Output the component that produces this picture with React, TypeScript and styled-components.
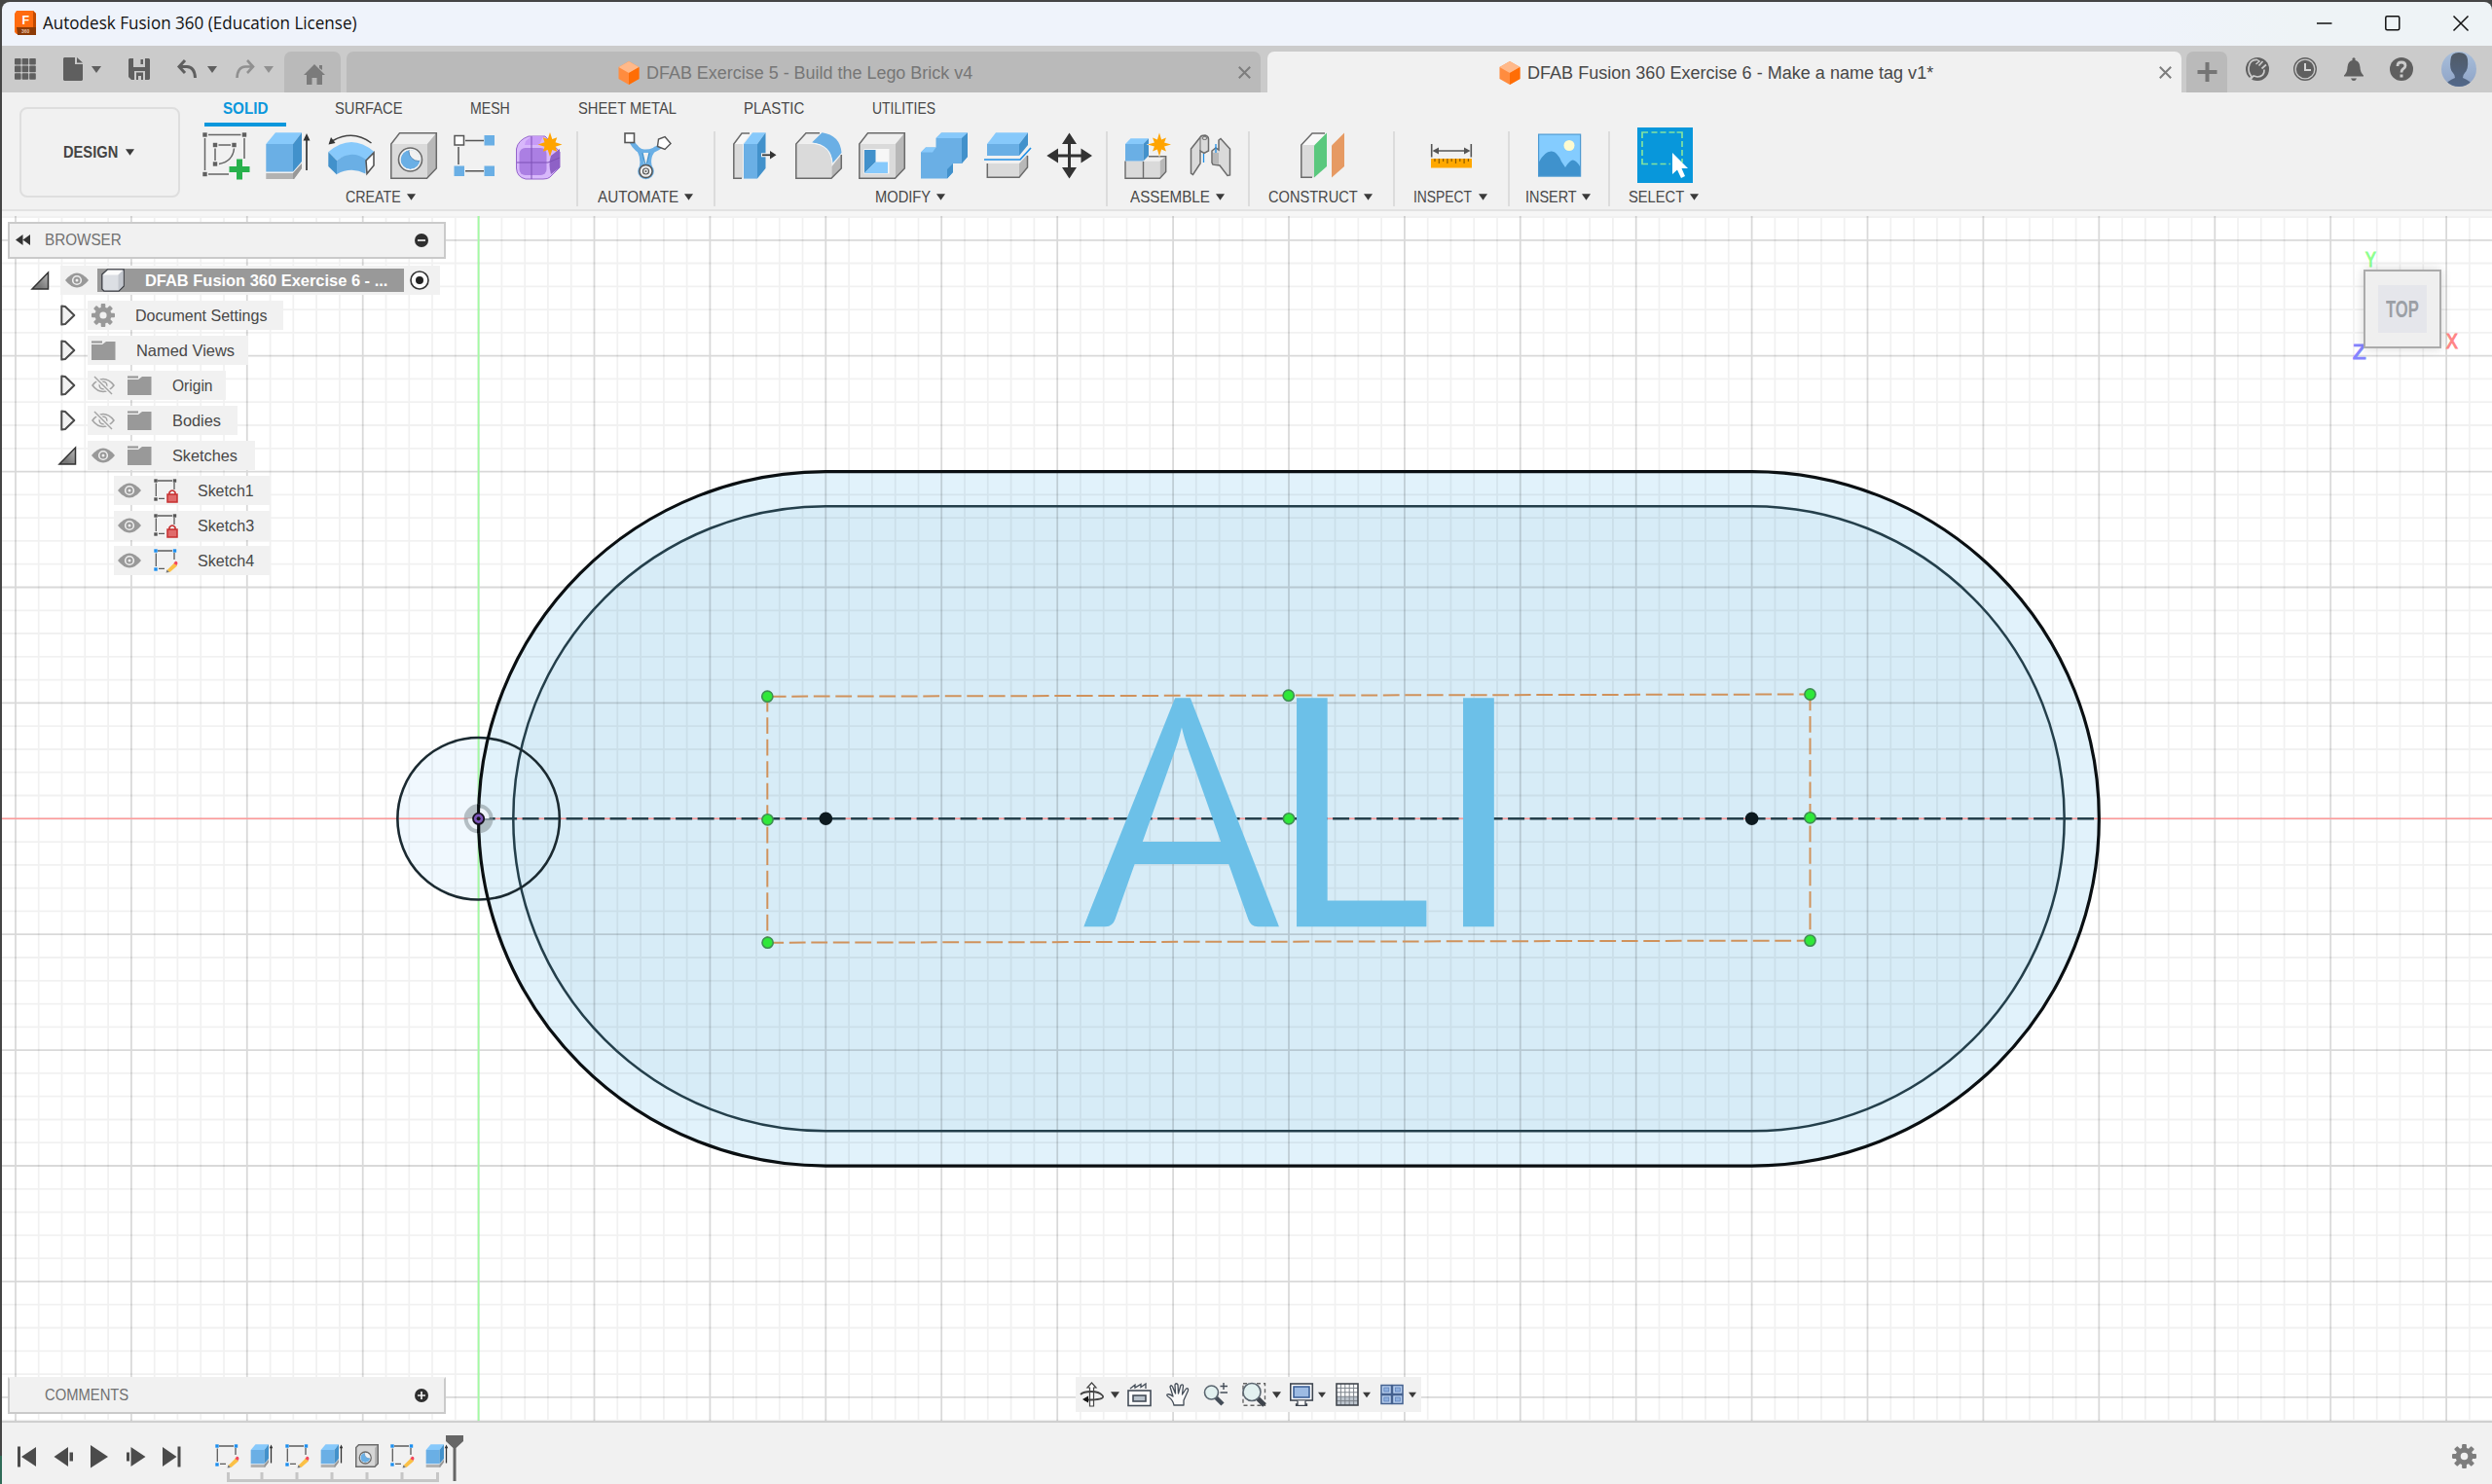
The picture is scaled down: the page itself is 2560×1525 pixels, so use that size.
import React, { useLayoutEffect, useRef, useState } from "react";
import styled, { createGlobalStyle, css } from "styled-components";

const Global = createGlobalStyle`
  html, body { margin: 0; padding: 0; background: #454545; }
  body { font-family: "Liberation Sans", Arial, sans-serif; overflow: hidden; }
  svg { display: block; flex: none; }
  * { box-sizing: border-box; }
`;

/* ---------- text squeezed to a set width ---------- */

const FitBox = styled.span<{ $w: number }>`
  display: inline-block;
  width: ${(p) => p.$w}px;
  flex: none;
  white-space: nowrap;
`;
const FitInner = styled.span`
  display: inline-block;
  transform-origin: 0 50%;
`;
function Fit({ w, children }: { w: number; children: string }) {
  const ref = useRef<HTMLSpanElement>(null);
  const [k, setK] = useState(1);
  useLayoutEffect(() => {
    if (ref.current) setK(w / ref.current.offsetWidth);
  }, [w, children]);
  return (
    <FitBox $w={w}>
      <FitInner ref={ref} style={{ transform: `scaleX(${k})` }}>{children}</FitInner>
    </FitBox>
  );
}

/* ---------- window ---------- */

const Window = styled.div`
  width: 2560px;
  height: 1525px;
  padding: 2px 0 0 2px;
  background: linear-gradient(#454545 0 1496px, #2f6b57 1496px);
  display: flex;
  flex-direction: column;
  overflow: hidden;
`;
const TitleBar = styled.header`
  height: 45px;
  flex: none;
  background: linear-gradient(90deg, #eff3fb 0 86%, #eef3f6 92%);
  border-radius: 8px 8px 0 0;
  display: flex;
  align-items: center;
  padding: 0 0 2px 13px;
  font: 17.6px "Open Sans", "Noto Sans", sans-serif;
  color: #111;
`;
const TitleText = styled.div`
  margin-left: 7px;
  padding-bottom: 1px;
  flex: 1;
`;
const WindowButtons = styled.div`
  display: flex;
  gap: 54px;
  padding-right: 24px;
`;

const QuickBar = styled.div`
  height: 48px;
  flex: none;
  background: #cbcbcb;
  display: flex;
  align-items: center;
`;
const Slot = styled.div<{ $gap: number; $w: number }>`
  margin-left: ${(p) => p.$gap}px;
  width: ${(p) => p.$w}px;
  flex: none;
  display: flex;
  justify-content: center;
`;
const Tab = styled.div<{ $gap: number; $w: number; $active?: boolean }>`
  margin-left: ${(p) => p.$gap}px;
  width: ${(p) => p.$w}px;
  height: 42px;
  flex: none;
  align-self: flex-end;
  border-radius: 7px 7px 0 0;
  display: flex;
  align-items: center;
  justify-content: center;
  background: ${(p) => (p.$active ? "#f1f1f1" : "#bababa")};
  color: ${(p) => (p.$active ? "#484848" : "#767676")};
  font-size: 18px;
`;
const HomeGlyph = styled.div`
  padding: 4px 0 0 4px;
`;
const TabLabel = styled.div`
  flex: 1;
  padding: 2px 0 0 16px;
  display: flex;
  align-items: center;
  justify-content: center;
  gap: 7px;
`;
const TabClose = styled.div`
  width: 33px;
  display: flex;
  justify-content: center;
`;

/* ---------- ribbon ---------- */

const Ribbon = styled.div`
  height: 127px;
  flex: none;
  background: #f1f1f1;
  display: flex;
  border-bottom: 5px solid #f6f6f6;
  box-shadow: inset 0 -2px 0 #e2e2e2;
`;
const WorkspaceButton = styled.div`
  width: 165px;
  height: 93px;
  margin: 15px 8px 0 18px;
  flex: none;
  border: 2px solid #dedede;
  border-radius: 8px;
  display: flex;
  align-items: center;
  justify-content: center;
  gap: 8px;
  padding-right: 2px;
  font-size: 16.5px;
  font-weight: bold;
  color: #444;
`;
const RibbonBody = styled.div`
  display: flex;
  flex-direction: column;
  margin-left: -1px;
`;
const RibbonTabs = styled.div`
  height: 36px;
  padding-left: 18px;
  display: flex;
  gap: 31.4px;
`;
const RibbonTab = styled.div<{ $active?: boolean }>`
  height: 35px;
  padding: 6px 19px 0;
  font-size: 16.5px;
  line-height: 20px;
  color: #484848;
  border-bottom: 4px solid transparent;
  ${(p) => p.$active && css`
    color: #0a97dc;
    font-weight: bold;
    border-bottom-color: #0a97dc;
  `}
`;
const ToolGroups = styled.div`
  display: flex;
`;
const Group = styled.div<{ $w: number; $shift?: number }>`
  width: ${(p) => p.$w}px;
  display: flex;
  flex-direction: column;
  align-items: center;
  & > :first-child { padding-left: ${(p) => p.$shift ?? 0}px; }
`;
const Divider = styled.div`
  width: 2px;
  height: 77px;
  margin-top: 4px;
  background: #dcdcdc;
`;
const Tools = styled.div`
  height: 57px;
  display: flex;
  align-items: center;
  gap: 16.5px;
`;
const GroupLabel = styled.div`
  height: 27px;
  padding: 1px 2px 0 0;
  display: flex;
  align-items: center;
  gap: 6px;
  font-size: 16.5px;
  color: #484848;
`;

/* ---------- canvas overlays ---------- */

const Canvas = styled.main`
  position: relative;
  flex: 1;
  background: #fff;
  overflow: hidden;
`;
const BrowserPanel = styled.aside`
  position: absolute;
  left: 6px;
  top: 6px;
  width: 450px;
`;
const PanelHeader = styled.div<{ $open?: boolean }>`
  height: 38px;
  width: 450px;
  background: #f1f1f1;
  border: 2px solid #cacaca;
  border-top-color: ${(p) => (p.$open ? "#cacaca" : "#f1f1f1")};
  display: flex;
  align-items: center;
  padding: 0 16px 1px 6px;
  font-size: 16.5px;
  color: #707070;
`;
const HeaderLead = styled.div`
  width: 29.5px;
`;
const Spacer = styled.div`
  flex: 1;
`;
const CommentsPanel = styled.aside`
  position: absolute;
  left: 6px;
  bottom: 7px;
`;
const Tree = styled.div`
  padding-top: 7px;
  display: flex;
  flex-direction: column;
  gap: 6px;
`;
const TreeRow = styled.div<{ $indent: number }>`
  height: 30px;
  padding-left: ${(p) => p.$indent}px;
  display: flex;
  align-items: center;
`;
const Expander = styled.div`
  width: 28px;
  display: flex;
  align-items: center;
`;
const TreeBody = styled.div<{ $w: number }>`
  width: ${(p) => p.$w}px;
  height: 30px;
  padding-left: 4.5px;
  background: #f1f1f1;
  display: flex;
  align-items: center;
  gap: 13px;
  font-size: 16.5px;
  color: #484848;
`;
const TreeText = styled.div`
  margin-left: 8px;
`;
const ActiveItem = styled.div`
  width: 315px;
  height: 24px;
  margin: 0 -7px 0 -4px;
  padding-left: 4px;
  background: #999;
  color: #fff;
  font-weight: bold;
  display: flex;
  align-items: center;
  gap: 21px;
`;
const ViewCube = styled.div`
  position: absolute;
  left: 2426px;
  top: 55px;
  width: 80px;
  height: 81px;
  border: 2px solid #ababab;
  background: #efefef;
  box-shadow: 0 0 10px rgba(0, 0, 0, 0.16);
  display: flex;
  align-items: center;
  justify-content: center;
`;
const CubeFace = styled.div`
  width: 50px;
  height: 49px;
  padding-top: 2px;
  background: #e5e6eb;
  display: flex;
  align-items: center;
  justify-content: center;
  font-size: 23px;
  font-weight: bold;
  color: #9b9fa5;
`;
const AxisLetter = styled.div<{ $x: number; $y: number; $c: string }>`
  position: absolute;
  left: ${(p) => p.$x}px;
  top: ${(p) => p.$y}px;
  font-size: 22px;
  line-height: 22px;
  color: ${(p) => p.$c};
  -webkit-text-stroke: 1.2px ${(p) => p.$c};
`;
const NavBar = styled.div`
  position: absolute;
  left: 1103px;
  bottom: 9px;
  height: 36px;
  width: 355px;
  background: #f1f1f1;
  display: flex;
  align-items: center;
  padding-left: 4px;
`;

/* ---------- timeline ---------- */

const Timeline = styled.footer`
  height: 65px;
  flex: none;
  background: #f1f1f1;
  border-top: 2px solid #cfcfcf;
  display: flex;
  padding: 13px 16px 0 16px;
`;
const Transport = styled.div`
  display: flex;
  align-items: center;
  height: 43px;
  gap: 17.6px;
  width: 203px;
`;
const Features = styled.div`
  position: relative;
  display: flex;
  flex-direction: column;
  padding-top: 9px;
`;
const FeatureRow = styled.div`
  display: flex;
  gap: 12px;
`;
const Marker = styled.div`
  position: absolute;
  left: 237px;
  top: 0;
`;
const GearSlot = styled.div`
  margin-left: auto;
  height: 43px;
  display: flex;
  align-items: center;
`;

/* ---------- icons ---------- */

const B = { light: "#87c9fb", mid: "#6aafe5", dark: "#4291cb" };
const G = { light: "#efefef", mid: "#dadada", dark: "#b8b8b8", line: "#6b6b6b" };

type SvgProps = { w?: number; h?: number; vb?: string; children: React.ReactNode };
const Svg = ({ w = 48, h = 48, vb, children }: SvgProps) => (
  <svg width={w} height={h} viewBox={vb ?? `0 0 ${w} ${h}`} fill="none" overflow="visible">
    {children}
  </svg>
);
const Caret = ({ c = "#3a3a3a", w = 10 }: { c?: string; w?: number }) => (
  <Svg w={w} h={7} vb="0 0 10 7"><path d="M0 0H10L5 7Z" fill={c} /></Svg>
);
const star = (cx: number, cy: number, R: number, r: number) =>
  Array.from({ length: 16 }, (_, i) => {
    const a = (i * Math.PI) / 8 - Math.PI / 2;
    const q = i % 2 ? r : i % 4 ? R * 0.82 : R;
    return `${cx + q * Math.cos(a)},${cy + q * Math.sin(a)}`;
  }).join(" ");

const node = (x: number, y: number, c = "#606060", s = 4.4) => (
  <rect key={`${x}-${y}`} x={x - s / 2} y={y - s / 2} width={s} height={s} fill={c} />
);

const SketchTool = () => (
  <Svg>
    <path d="M6 2.5H39.500M2.500 6V39M43 6V27M6 43H27M16.500 13H29M13 16.500V29M32.500 16.500Q31 30 17 32.500" stroke="#666" strokeWidth="1.500" />
    {[[2.5, 2.5], [43, 2.5], [2.5, 43], [13, 13], [32.5, 13], [13, 32.5]].map(([x, y]) => node(x, y))}
    <path d="M35 27.500h6v7.500h7.500v6h-7.500v7.500h-6v-7.500h-7.500v-6h7.500z" fill="#28b14c" />
  </Svg>
);
const Extrude = ({ size = 48 }: { size?: number }) => (
  <Svg w={size} h={size} vb="0 0 48 48">
    <path d="M1.300 42H29L38 32V37L30 48H1.300Z" fill="#b2b2b2" />
    <path d="M29 42L38 32V37L30 48H29Z" fill="#989898" />
    <path d="M1.300 12L11 .300H38L29 12Z" fill={B.light} />
    <path d="M1.300 12H29V40.500H1.300Z" fill={B.mid} />
    <path d="M29 12L38 .300V30L29 40.500Z" fill={B.dark} />
    <path d="M43 6V39" stroke="#333" strokeWidth={size < 48 ? 2.6 : 1.7} />
    <path d="M43 1L46.500 8.500H39.500Z" fill="#333" />
  </Svg>
);
const Revolve = () => (
  <Svg>
    <path d="M.500 20Q24 0 47.500 20L39 29Q24 18 9 29Z" fill={B.light} />
    <path d="M9 29Q24 17 39 28L38.500 42.500Q24 35 9 43Z" fill={B.mid} />
    <path d="M.300 20L9 29V43.500L.300 35Z" fill={B.dark} />
    <path d="M47 21V34L40 42.500L39 29Z" fill="#fff" stroke="#555" strokeWidth="1.600" />
    <path d="M44.500 11Q26-3 5 8.500" stroke="#444" strokeWidth="1.500" />
    <path d="M.500 12.500L3 5L7.500 11Z" fill="#333" />
  </Svg>
);
const BoxFaces = () => (
  <>
    <path d="M9 .800H47.300V37L37 47.300H.800V12Z" fill={G.mid} />
    <path d="M9.500 .800H47.300L38 12H.800Z" fill={G.light} />
    <path d="M38 12L47.300 .800V37L38 47Z" fill={G.dark} />
    <path d="M9.500 .800H47.300V37L37.500 47.300H.800V12Z" stroke={G.line} strokeWidth="1.500" />
  </>
);
const Hole = ({ size = 48 }: { size?: number }) => (
  <Svg w={size} h={size} vb="0 0 48 48">
    <clipPath id="bore"><circle cx="20.500" cy="28" r="10" /></clipPath>
    {size < 48 ? (
      <>
        <path d="M7 1.500H46.500V40L40 46.500H1.500V7Z" fill="#d6d6d6" />
        <path d="M46.500 1.500V40L40 46.500V8Z" fill="#b4b4b4" />
        <path d="M7 1.500H46.500V40L40 46.500H1.500V7Z" stroke={G.line} strokeWidth="3" />
      </>
    ) : <BoxFaces />}
    <circle cx="20.500" cy="28" r="12" fill="#f4f4f4" stroke={G.line} strokeWidth={size < 48 ? 2.6 : 1.6} />
    <g clipPath="url(#bore)">
      <circle cx="20.500" cy="28" r="10" fill={B.mid} />
      <circle cx="29" cy="19.500" r="10" fill="#f1f1f1" stroke="#4a7fae" strokeWidth=".800" />
    </g>
  </Svg>
);
const Pattern = () => (
  <Svg>
    <path d="M12 8.500H31M5 15V33M12 39.700H31" stroke="#555" strokeWidth="1.500" />
    <rect x="1" y="3.500" width="9.500" height="9.500" fill="#fff" stroke="#555" strokeWidth="1.500" />
    {[[31.5, 3], [0.5, 34.5], [31.5, 34.5]].map(([x, y]) => (
      <rect key={`${x}${y}`} x={x} y={y} width="10.500" height="10.500" fill={B.mid} />
    ))}
  </Svg>
);
const Form = () => (
  <Svg>
    <path d="M13 4H30L45 20V36L35 46Q33 48 28 48H10Q1 46 .500 37V17Q2 8 13 4Z" fill="#d8b8fb" stroke="#9566cc" strokeWidth="1" />
    <path d="M10 9L16 4H28L24 13H9Z" fill="#c79bf6" />
    <rect x="3.500" y="16" width="28" height="28" rx="6" fill="#ab7fe3" />
    <path d="M36 24L45 17V36L36 43Q33 33 36 24Z" fill="#8e61c6" />
    <path d="M16 4V48M1 31H33L45 26" stroke="#7d50b5" strokeWidth="1" />
    <polygon points={star(35, 12.5, 12.5, 6)} fill="#ffa400" />
  </Svg>
);
const Automate = () => (
  <Svg>
    <path d="M8 8Q15 21 23 20Q32 20 41 12" stroke={B.mid} strokeWidth="5" />
    <path d="M13 14Q22 24 18.500 38M34 16Q24 24 28.500 38" stroke={B.mid} strokeWidth="4" />
    <path d="M20 21L23.500 36L27 21" fill="#f1f1f1" stroke={B.dark} strokeWidth="1.200" />
    <rect x="2" y="1" width="9.500" height="9.500" fill="#fff" stroke="#555" strokeWidth="1.600" />
    <path d="M43 4.500L49 11.500L43 17.500L35.500 14.500L36.500 7Z" fill="#fff" stroke="#555" strokeWidth="1.400" />
    <circle cx="23.500" cy="40" r="8.300" fill={B.mid} />
    <circle cx="23.500" cy="40" r="6.600" fill="#eee" stroke="#555" strokeWidth="1.500" />
    <circle cx="23.500" cy="40" r="3" stroke="#555" strokeWidth="1.200" />
    <circle cx="23.500" cy="40" r="1" fill="#555" />
  </Svg>
);
const PressPull = () => (
  <Svg>
    <path d="M.800 12H10V47.300H.800Z" fill={G.mid} />
    <path d="M.800 12L9 1H17L10 12Z" fill="#f8f8f8" />
    <path d="M17 1H9L.800 12V47.300H9" stroke={G.line} strokeWidth="1.500" />
    <path d="M11 12L20 .300H33.500L25 12Z" fill={B.light} />
    <path d="M11 12H25V47.600H11Z" fill={B.mid} />
    <path d="M25 12L33.500 .300V37L25 47.600Z" fill={B.dark} />
    <path d="M29 23.300H40" stroke="#f1f1f1" strokeWidth="4" />
    <path d="M30 23.300H40" stroke="#333" strokeWidth="1.700" />
    <path d="M38 19L44.500 23.300L38 27.500Z" fill="#333" />
  </Svg>
);
const Fillet = () => (
  <Svg>
    <path d="M.800 12H20Q37 14 37.500 34V47.300H.800Z" fill={G.mid} />
    <path d="M.800 12L11 .800H26L17 11Z" fill={G.light} />
    <path d="M37.500 35L47.300 23V37L37.500 47.300Z" fill={G.dark} />
    <path d="M25 .800H11L.800 12V47.300H37L47.300 37V23" stroke={G.line} strokeWidth="1.500" />
    <path d="M27.500 .300Q46 3 47.500 21L38 32Q36 13 17 10.500Z" fill={B.mid} />
    <path d="M17 11Q37 13 38 32" stroke="#f5f5f5" strokeWidth="1.200" />
  </Svg>
);
const Shell = () => (
  <Svg>
    <BoxFaces />
    <rect x="5.500" y="17" width="26" height="25.500" fill="#f7f7f7" />
    <path d="M6 18H17.500V30.500L6 42Z" fill={B.dark} />
    <path d="M17.500 30.500H30V42H6Z" fill={B.light} />
  </Svg>
);
const Combine = () => (
  <Svg>
    <path d="M0 20.500L5 15.500H15.500V6L21 .500H48V25L42 32H33V41L27 47.600H0Z" fill={B.mid} />
    <path d="M15.500 6L21 .500H48L42 6ZM0 20.500L5 15.500H15.500L12 20.500Z" fill={B.light} />
    <path d="M42 6L48 .500V25L42 32ZM27 38L33 32V41L27 47.600Z" fill={B.dark} />
  </Svg>
);
const Split = () => (
  <Svg>
    <path d="M3 12L12 .300H45L36 12Z" fill={B.light} />
    <path d="M3 12H36V24H3Z" fill={B.mid} />
    <path d="M36 12L45 .300V13L36 24Z" fill={B.dark} />
    <path d="M0 28H37L48 16" stroke="#1f8fe6" strokeWidth="1.700" />
    <path d="M3.300 32H36V46.300H3.300Z" fill={G.mid} />
    <path d="M36 32L44.500 23V36L36 46.300Z" fill={G.dark} />
    <path d="M3.300 32V46.300H36L44.500 36V24" stroke={G.line} strokeWidth="1.500" />
  </Svg>
);
const Move = () => (
  <Svg>
    <path d="M23.500 8V40M8 24H40" stroke="#333" strokeWidth="3" />
    <path d="M23.500 .500L31 12H16ZM23.500 47.500L16 36H31ZM.300 24L12 16.500V31.500ZM47 24L35.500 16.500V31.500Z" fill="#333" />
  </Svg>
);
const NewComponent = () => (
  <Svg>
    <path d="M1 29.500H36V47H1Z" fill={G.mid} />
    <path d="M19.500 29.500L25 24.500H43L36.500 29.500Z" fill={G.light} />
    <path d="M36.500 29.500L43 24.500V40L36.500 47Z" fill={G.dark} />
    <path d="M1 29.500V47.200H36.500L42.700 40.500V24.700H25M19.500 30V47" stroke={G.line} strokeWidth="1.400" />
    <path d="M1 12L6.500 6.300H25L19.500 12Z" fill={B.light} />
    <path d="M1 12H19.500V29.500H1Z" fill={B.mid} />
    <path d="M19.500 12L25 6.300V24L19.500 29.500Z" fill={B.dark} />
    <polygon points={star(36, 12.5, 13.5, 6)} fill="#f1f1f1" />
    <polygon points={star(36, 12.5, 12, 5.5)} fill="#ffa400" />
  </Svg>
);
const Joint = () => (
  <Svg>
    <path d="M4.500 17L14 5Q15 3 19 3Q22.500 4 22.500 7V19L18 21.500L14 19V32L6.500 43.500L4.500 42Z" fill={G.mid} stroke={G.line} strokeWidth="1.500" />
    <path d="M14 6V19" stroke={G.line} strokeWidth="1" />
    <ellipse cx="18.500" cy="6" rx="2.500" ry="1.500" stroke={G.line} />
    <path d="M33 8L35 6.500L44.500 17V44L42 44.500L34 34L27 33L26 31V19L30 16L33 18Z" fill={G.mid} stroke={G.line} strokeWidth="1.500" />
    <path d="M27 21H33V33L27 32Z" fill={G.dark} />
    <path d="M17.500 22V31M30 12V21" stroke="#1f8fe6" strokeWidth="1.300" />
  </Svg>
);
const Construct = () => (
  <Svg>
    <path d="M2.800 13H16V46.300H2.800Z" fill={G.mid} />
    <path d="M2.800 13L13.500 1H28L17 13Z" fill="#f8f8f8" />
    <path d="M27 1H14L2.800 13V46.300H14" stroke={G.line} strokeWidth="1.500" />
    <path d="M16 13.500L29 .500V35L16 46.500Z" fill="#5ac87d" />
    <path d="M34 13.500L47 .500V35L34 46.500Z" fill="#e69a63" />
  </Svg>
);
const Measure = () => (
  <Svg>
    <path d="M3.700 12V25.500M44.300 12V25.500M8 19H40" stroke="#555" strokeWidth="1.600" />
    <path d="M4.500 19L11 15.500V22.500ZM43.500 19L37 15.500V22.500Z" fill="#555" />
    <rect x="3" y="27" width="42" height="9.500" fill="#ffa800" />
    <path d="M7 27V30M11.300 27V32M15.600 27V30M19.900 27V32M24.200 27V30M28.500 27V32M32.800 27V30M37.100 27V32M41.400 27V30" stroke="#8a5a00" strokeWidth="1.200" />
  </Svg>
);
const InsertImage = () => (
  <Svg>
    <rect x="2.600" y="2.100" width="43" height="43" fill="#84ccff" />
    <path d="M2.600 31Q9 19 16 19.500Q22 20 26 30L30 36Q35 28 38 28.500Q42 29 45.600 36V45.100H2.600Z" fill="#3f92cd" />
    <circle cx="34" cy="13.500" r="5.500" fill="#fdfbd0" />
    <rect x="2.600" y="2.100" width="43" height="43" stroke="#4e9ad2" strokeWidth="1.200" />
  </Svg>
);
const SelectTool = () => (
  <Svg w={57} h={57}>
    <rect width="57" height="57" fill="#0897db" />
    <path d="M5 11V5H11M40.500 5H46V11M5 32V37.500H11" stroke="#82e3a0" strokeWidth="1.700" />
    <path d="M14.500 5H39M5 14V31M46 14V36M14.500 37.500H34" stroke="#82e3a0" strokeWidth="1.700" strokeDasharray="6 3" />
    <path d="M36 26V48L41 43.500L45 52L49 50L45.500 42H52Z" fill="#fff" />
  </Svg>
);

const FileSketch = ({ locked }: { locked?: boolean }) => (
  <Svg w={24} h={24}>
    <path d="M4 2H19M2.300 4.500V18M21 4V11M5 20.300H11" stroke="#5c5c5c" strokeWidth="1.300" />
    {[[2, 2], [21.5, 2], [2, 21]].map(([x, y]) => node(x, y, locked ? "#555" : "#1c8ff0", 3.4))}
    {locked ? (
      <>
        <rect x="14" y="16" width="10" height="8" fill="#e06a6a" stroke="#c62f2f" strokeWidth="1.500" />
        <path d="M16 16V14Q19 10 22 14V16" stroke="#c62f2f" strokeWidth="1.600" />
      </>
    ) : (
      <>
        <path d="M13.500 22L21 14.500L24 17.500L16.500 24Z" fill="#fbc046" />
        <path d="M20.500 15L22 12.800Q24.500 12.500 24.500 15L23.500 17Z" fill="#f4455a" />
        <path d="M12.500 24.500L13.500 21.500L16 24Z" fill="#777" />
      </>
    )}
  </Svg>
);
const Eye = () => (
  <Svg w={24} h={24}>
    <path d="M0 12Q6 4.500 12 4.500T24 12Q18 19.500 12 19.500T0 12Z" fill="#999" />
    <circle cx="12" cy="12" r="4.300" stroke="#eee" strokeWidth="1.600" />
    <circle cx="12" cy="12" r="1.500" fill="#eee" />
  </Svg>
);
const EyeOff = () => (
  <Svg w={24} h={24}>
    <path d="M1 12Q6 5.500 12 5.500T23 12Q18 18.500 12 18.500T1 12Z" stroke="#a3a3a3" strokeWidth="1.500" />
    <circle cx="12" cy="12" r="3.800" stroke="#a3a3a3" strokeWidth="1.500" />
    <path d="M3 3L21 21" stroke="#f1f1f1" strokeWidth="4" />
    <path d="M3 3L21 21" stroke="#a3a3a3" strokeWidth="1.500" />
  </Svg>
);
const Folder = () => (
  <Svg w={25} h={24}>
    <path d="M0 6H11L15 3H24.500V22H0Z" fill="#999" />
    <path d="M0 3.500H11" stroke="#999" strokeWidth="2.200" />
  </Svg>
);
const Gear = ({ size = 24, c = "#999", hole = "#f1f1f1" }: { size?: number; c?: string; hole?: string }) => (
  <Svg w={size} h={size} vb="0 0 24 24">
    {[0, 45, 90, 135].map((a) => (
      <rect key={a} x="9.700" y="0" width="4.600" height="24" rx="1" fill={c} transform={`rotate(${a} 12 12)`} />
    ))}
    <circle cx="12" cy="12" r="8.600" fill={c} />
    <circle cx="12" cy="12" r="3.600" fill={hole} />
  </Svg>
);
const Cube = () => (
  <Svg w={24} h={24}>
    <path d="M.800 6L6.500 .800H23.200V18L18 23.200H3L.800 21Z" fill="#dcdfe4" stroke="#3c3f45" strokeWidth="1.300" />
    <path d="M2 6.500L7 1.800H22L17.500 6.500Z" fill="#fbfbfb" />
    <path d="M17.500 6.500L22.500 2V17.500L17.500 22Z" fill="#c3c7ce" />
  </Svg>
);
const Collapsed = () => (
  <Svg w={16} h={22}>
    <path d="M1.300 1.500L5 2L14.300 11L5 20L1.300 20.500Z" fill="#f1f1f1" stroke="#4a4a4a" strokeWidth="2" strokeLinejoin="round" />
  </Svg>
);
const Expanded = () => (
  <Svg w={17} h={19}>
    <defs>
      <linearGradient id="fold" x1="0" y1="1" x2="1" y2="0">
        <stop offset=".3" stopColor="#777" /><stop offset="1" stopColor="#bbb" />
      </linearGradient>
    </defs>
    <path d="M-1 18L15.500 1V18Z" fill="url(#fold)" stroke="#333" strokeWidth="1.500" />
  </Svg>
);
const Badge = ({ plus }: { plus?: boolean }) => (
  <Svg w={14} h={14}>
    <circle cx="7" cy="7" r="7" fill="#2f2f2f" />
    <path d={plus ? "M3 7H11M7 3V11" : "M3 7H11"} stroke="#f1f1f1" strokeWidth="1.700" />
  </Svg>
);
const OrangeCube = () => (
  <Svg w={22} h={24}>
    <path d="M11 0L21.500 6V18L11 24L.500 18V6Z" fill="#ff8c3f" />
    <path d="M11 0L21.500 6L11 12L.500 6Z" fill="#ffb98a" />
    <path d="M21.500 6V18L11 24V12Z" fill="#ff6d05" />
  </Svg>
);
const Cross = ({ c }: { c: string }) => (
  <Svg w={13} h={13}><path d="M.800 .800L12.200 12.200M12.200 .800L.800 12.200" stroke={c} strokeWidth="2" /></Svg>
);

/* ---------- sketch drawing ---------- */

const U = 118.91;
const OX = 491.6;
const OY = 841.3;

const gridLines = (major: boolean) => {
  const step = U / 5;
  let d = "";
  for (let i = -34; i <= 90; i++) {
    if ((i % 5 === 0) !== major) continue;
    const x = OX + i * step;
    if (x > 2 && x < 2560) d += `M${x.toFixed(1)} 222V1460`;
    const y = OY + i * step;
    if (y > 222 && y < 1460) d += `M2 ${y.toFixed(1)}H2560`;
  }
  return d;
};

const Drawing = styled.svg`
  width: 2558px;
  height: 1238px;
`;
const Letters = styled.text`
  font-family: Lato, sans-serif;
  font-size: 328px;
  fill: #6cc0e8;
`;

const handles = [
  [788.3, 715.7], [1323.7, 714.7], [1859.5, 713.5],
  [788.5, 842.3], [1324, 841.3], [1859.5, 840.3],
  [788.6, 968.7], [1859.5, 966.6],
];

const SketchView = () => {
  const L = OX, R = OX + 14 * U, r = 3 * U, o = 0.3 * U;
  return (
    <Drawing viewBox="2 222 2558 1238" fill="none">
      <clipPath id="apex"><path d="M1112 955L1208 715H1222L1315 955Z" /></clipPath>
      <circle cx={OX} cy={OY} r={0.7 * U} fill="#f0f8fe" />
      <rect x={L} y={OY - r} width={R - L} height={2 * r} rx={r} fill="#e1f2fb" />
      <rect x={L + o} y={OY - r + o} width={R - L - 2 * o} height={2 * (r - o)} rx={r - o} fill="#d7ecf7" />
      <path d={gridLines(false)} stroke="#000" strokeOpacity=".055" strokeWidth="1.800" />
      <path d={gridLines(true)} stroke="#000" strokeOpacity=".150" strokeWidth="1.800" />
      <path d={`M${OX} 222V1460`} stroke="#a2fba2" strokeWidth="1.800" />
      <path d={`M2 ${OY}H2560`} stroke="#ff9a9a" strokeWidth="1.500" />
      <path d={`M${OX} ${OY}H${R}`} stroke="#26414c" strokeWidth="2.600" strokeDasharray="17 5.500" />
      <rect x={L + o} y={OY - r + o} width={R - L - 2 * o} height={2 * (r - o)} rx={r - o} stroke="#243f4b" strokeWidth="2.500" />
      <circle cx={OX} cy={OY} r={0.7 * U} stroke="#1b2a31" strokeWidth="2.600" />
      <rect x={L} y={OY - r} width={R - L} height={2 * r} rx={r} stroke="#0a0f12" strokeWidth="3.200" />
      <g stroke="#d0925c" strokeWidth="2" strokeDasharray="16.800 5.700">
        <path d="M790.800 715.700L1859.500 713.500" />
        <path d="M788.300 715.700V968.700" strokeDashoffset="1" />
        <path d="M788.300 968.700L1859.500 966.600" />
        <path d="M1859.500 713.500V966.600" />
      </g>
      <g clipPath="url(#apex)">
        <Letters transform="translate(1112.300 952.300) scale(.916 1)">A</Letters>
      </g>
      <Letters y="952.3" x="1302 1473">LI</Letters>
      {handles.map(([x, y]) => (
        <circle key={`${x}-${y}`} cx={x} cy={y} r="5.600" fill="#2fe83a" stroke="#3f8f52" strokeWidth="1.600" />
      ))}
      <circle cx={OX + r} cy={OY} r="6.800" fill="#0d1a1f" />
      <circle cx={R - r} cy={OY} r="6.800" fill="#0d1a1f" />
      <circle cx={OX} cy={OY} r="15" fill="#8c979c" fillOpacity=".600" />
      <path d={`M${OX} ${OY - 11}A11 11 0 0 1 ${OX + 11} ${OY}H${OX}ZM${OX} ${OY + 11}A11 11 0 0 1 ${OX - 11} ${OY}H${OX}Z`} fill="#eef5fa" />
      <path d={`M${OX} ${OY - 15}V${OY + 15}`} stroke="#0a0f12" strokeWidth="3" />
      <circle cx={OX} cy={OY} r="5.600" fill="#7c55b8" stroke="#18121f" strokeWidth="1.800" />
      <circle cx={OX} cy={OY} r="2" fill="#111" />
    </Drawing>
  );
};

/* ---------- data ---------- */

const ribbonTabs: [string, number][] = [
  ["SOLID", 46], ["SURFACE", 69.5], ["MESH", 41], ["SHEET METAL", 101], ["PLASTIC", 62.5], ["UTILITIES", 65],
];

const groups: { name: string; lw: number; w: number; shift?: number; tools: React.FC[] }[] = [
  { name: "CREATE", lw: 57, w: 400, shift: 2, tools: [SketchTool, Extrude, Revolve, Hole, Pattern, Form] },
  { name: "AUTOMATE", lw: 83, w: 139, tools: [Automate] },
  { name: "MODIFY", lw: 57, w: 401, shift: 5, tools: [PressPull, Fillet, Shell, Combine, Split, Move] },
  { name: "ASSEMBLE", lw: 82, w: 144, shift: 2, tools: [NewComponent, Joint] },
  { name: "CONSTRUCT", lw: 92, w: 147, tools: [Construct] },
  { name: "INSPECT", lw: 60.5, w: 116, tools: [Measure] },
  { name: "INSERT", lw: 52.5, w: 101, tools: [InsertImage] },
  { name: "SELECT", lw: 57, w: 112, tools: [SelectTool] },
];

type Item = { text: string; tw: number; w: number; icons: React.ReactNode[]; open?: boolean };
const items: Item[] = [
  { text: "Document Settings", tw: 135, w: 201, icons: [<Gear key="g" />] },
  { text: "Named Views", tw: 101.5, w: 165, icons: [<Folder key="f" />] },
  { text: "Origin", tw: 41.5, w: 142.5, icons: [<EyeOff key="e" />, <Folder key="f" />] },
  { text: "Bodies", tw: 49.5, w: 154.5, icons: [<EyeOff key="e" />, <Folder key="f" />] },
  { text: "Sketches", tw: 67, w: 172.5, icons: [<Eye key="e" />, <Folder key="f" />], open: true },
];
const sketches: [string, number, boolean][] = [["Sketch1", 58, true], ["Sketch3", 58.5, true], ["Sketch4", 58.5, false]];

const dark = "#5f5f5f";

export default function App() {
  return (
    <>
      <Global />
      <Window>
        <TitleBar>
          <Svg w={22} h={25}>
            <path d="M2 0H19L22 3V24H2L0 22V3Z" fill="#ff6b0f" />
            <path d="M19 0L22 3V24H19Z" fill="#c34a00" />
            <path d="M2 17H22V25H3Z" fill="#8c3a06" />
            <text x="7.500" y="13.500" fontSize="12.500" fontWeight="bold" fontFamily="Liberation Sans" fill="#fff">F</text>
            <text x="7" y="23" fontSize="5" fontWeight="bold" fontFamily="Liberation Sans" fill="#e9c3a8">360</text>
          </Svg>
          <TitleText><Fit w={323}>Autodesk Fusion 360 (Education License)</Fit></TitleText>
          <WindowButtons>
            <Svg w={16} h={16}><path d="M0 8H15.500" stroke="#111" strokeWidth="1.500" /></Svg>
            <Svg w={16} h={16}><rect x=".800" y=".800" width="14" height="14" rx="1.500" stroke="#111" strokeWidth="1.500" /></Svg>
            <Svg w={16} h={16}><path d="M.500 .500L15.500 15.500M15.500 .500L.500 15.500" stroke="#111" strokeWidth="1.500" /></Svg>
          </WindowButtons>
        </TitleBar>

        <QuickBar>
          <Slot $gap={13} $w={22}>
            <Svg w={22} h={22}>
              {[0, 7.6, 15.2].map((x) => [0, 7.6, 15.2].map((y) => (
                <rect key={`${x}${y}`} x={x} y={y} width="6.600" height="6.600" rx=".800" fill={dark} />
              )))}
            </Svg>
          </Slot>
          <Slot $gap={28} $w={20}>
            <Svg w={20} h={24}><path d="M1 0H12V7H20V23L19 24H1L0 23V1ZM14 0L20 5.500H14Z" fill={dark} /></Svg>
          </Slot>
          <Slot $gap={9} $w={10}><Caret c={dark} /></Slot>
          <Slot $gap={28} $w={22}>
            <Svg w={22} h={22}>
              <path d="M1 0H21L22 1V21L21 22H3L0 19V1Z" fill={dark} />
              <path d="M5 0H17V9H5ZM6 13H17V22H6Z" fill="#cbcbcb" />
              <path d="M8 14.500H15V22H13V18H10V22H8ZM12.500 1H15V6H12.500Z" fill={dark} />
            </Svg>
          </Slot>
          <Slot $gap={28} $w={20}>
            <Svg w={20} h={20}><path d="M8 1L2 7.500L8 14M2.500 7.500H10Q18 8 18.500 19" stroke={dark} strokeWidth="3" /></Svg>
          </Slot>
          <Slot $gap={11} $w={10}><Caret c={dark} /></Slot>
          <Slot $gap={19} $w={19}>
            <Svg w={20} h={20}><path d="M12 1L18 7.500L12 14M17.500 7.500H10Q2 8 1.500 19" stroke="#909090" strokeWidth="2.600" /></Svg>
          </Slot>
          <Slot $gap={10} $w={10}><Caret c="#909090" /></Slot>
          <Tab $gap={10.5} $w={58.5}>
            <HomeGlyph>
              <Svg w={22} h={21}>
                <path d="M11 0L22 11H19V21H13.500V14H8.500V21H3V11H0ZM16 1H19V6L16 4Z" fill="#7b7b7b" />
              </Svg>
            </HomeGlyph>
          </Tab>
          <Tab $gap={5.5} $w={939.5}>
            <TabLabel><OrangeCube /><Fit w={335}>DFAB Exercise 5 - Build the Lego Brick v4</Fit></TabLabel>
            <TabClose><Cross c="#7d7d7d" /></TabClose>
          </Tab>
          <Tab $gap={6.5} $w={939} $active>
            <TabLabel><OrangeCube /><Fit w={417}>DFAB Fusion 360 Exercise 6 - Make a name tag v1*</Fit></TabLabel>
            <TabClose><Cross c="#7d7d7d" /></TabClose>
          </Tab>
          <Tab $gap={5.5} $w={42}>
            <Svg w={20} h={20}><path d="M10.500 0V20M.500 10H20.500" stroke="#757575" strokeWidth="4" /></Svg>
          </Tab>
          <Slot $gap={18.5} $w={24}>
            <Svg w={24} h={24}>
              <circle cx="12" cy="12" r="12" fill={dark} />
              <path d="M12 2.500Q4 2 3 10.500Q2.500 16 6 19.500L4.500 22" stroke="#cbcbcb" strokeWidth="1.700" />
              <path d="M13.500 8.500L17.500 4M16.500 11.500L21 7.500" stroke="#cbcbcb" strokeWidth="1.700" />
              <path d="M19 12.500Q19.500 19.500 12 20L8 19L5 22.500" stroke="#cbcbcb" strokeWidth="1.700" />
              <path d="M12 2.500L14 4L10.500 7" stroke="#cbcbcb" strokeWidth="1.500" />
            </Svg>
          </Slot>
          <Slot $gap={25.5} $w={24}>
            <Svg w={24} h={24}>
              <circle cx="12" cy="12" r="11.300" stroke={dark} strokeWidth="1.400" />
              <circle cx="12" cy="12" r="9.200" fill={dark} />
              <path d="M12 6V13H18" stroke="#d4d4d4" strokeWidth="2" />
            </Svg>
          </Slot>
          <Slot $gap={25.5} $w={24}>
            <Svg w={24} h={24}>
              <path d="M10.500 3V1Q12-.500 13.500 1V3Q18 4 18.500 10Q18.500 15 22 18.500V19.500H2V18.500Q5.500 15 5.500 10Q6 4 10.500 3ZM9 21.500H15Q14 24 12 24T9 21.500Z" fill={dark} />
            </Svg>
          </Slot>
          <Slot $gap={25.5} $w={24}>
            <Svg w={24} h={24}>
              <circle cx="12" cy="12" r="12" fill={dark} />
              <path d="M8 9Q8 5 12 5T16 8.500Q16 10.500 13.500 12Q12 13 12 15.500" stroke="#cbcbcb" strokeWidth="2.800" />
              <rect x="10.500" y="17.500" width="3" height="3" fill="#cbcbcb" />
            </Svg>
          </Slot>
          <Slot $gap={28.5} $w={36}>
            <Svg w={36} h={36}>
              <defs>
                <clipPath id="face"><circle cx="18" cy="18" r="18" /></clipPath>
                <linearGradient id="sky" x2="0" y2="1"><stop stopColor="#a9bfdb" /><stop offset="1" stopColor="#8ea3c6" /></linearGradient>
                <linearGradient id="bust" x2="0" y2="1"><stop stopColor="#505a66" /><stop offset="1" stopColor="#52688a" /></linearGradient>
              </defs>
              <g clipPath="url(#face)">
                <rect width="36" height="36" fill="url(#sky)" />
                <path d="M9.500 8Q10 1 18 1T27 8Q28 18 24 22Q22 24 22 27Q30 30 33 36H3Q6 30 14 27Q14 24 12 22Q8 18 9.500 8Z" fill="url(#bust)" />
              </g>
            </Svg>
          </Slot>
        </QuickBar>

        <Ribbon>
          <WorkspaceButton><Fit w={56}>DESIGN</Fit><Caret w={9} /></WorkspaceButton>
          <RibbonBody>
            <RibbonTabs>
              {ribbonTabs.map(([t, w], i) => (
                <RibbonTab key={t} $active={i === 0}><Fit w={w}>{t}</Fit></RibbonTab>
              ))}
            </RibbonTabs>
            <ToolGroups>
              {groups.map((g, i) => (
                <React.Fragment key={g.name}>
                  {i > 0 && <Divider />}
                  <Group $w={g.w} $shift={g.shift}>
                    <Tools>{g.tools.map((T, k) => <T key={k} />)}</Tools>
                    <GroupLabel><Fit w={g.lw}>{g.name}</Fit><Caret w={9} /></GroupLabel>
                  </Group>
                </React.Fragment>
              ))}
            </ToolGroups>
          </RibbonBody>
        </Ribbon>

        <Canvas>
          <SketchView />
          <BrowserPanel>
            <PanelHeader $open>
              <HeaderLead><Svg w={15} h={11}><path d="M7.500 0V11L0 5.500ZM15 0V11L7.500 5.500Z" fill="#333" /></Svg></HeaderLead>
              <Fit w={78.5}>BROWSER</Fit>
              <Spacer />
              <Badge />
            </PanelHeader>
            <Tree>
              <TreeRow $indent={26}>
                <Expander><Expanded /></Expander>
                <TreeBody $w={390}>
                  <Eye />
                  <ActiveItem><Cube /><Fit w={249}>DFAB Fusion 360 Exercise 6 - ...</Fit></ActiveItem>
                  <Svg w={20} h={20}>
                    <circle cx="10" cy="10" r="9" fill="#fff" stroke="#333" strokeWidth="1.600" />
                    <circle cx="10" cy="10" r="4" fill="#222" />
                  </Svg>
                </TreeBody>
              </TreeRow>
              {items.map((it) => (
                <TreeRow key={it.text} $indent={53.5}>
                  <Expander>{it.open ? <Expanded /> : <Collapsed />}</Expander>
                  <TreeBody $w={it.w}>
                    {it.icons}
                    <TreeText><Fit w={it.tw}>{it.text}</Fit></TreeText>
                  </TreeBody>
                </TreeRow>
              ))}
              {sketches.map(([t, w, locked]) => (
                <TreeRow key={t} $indent={108.5}>
                  <TreeBody $w={160.5}>
                    <Eye />
                    <FileSketch locked={locked} />
                    <TreeText><Fit w={w}>{t}</Fit></TreeText>
                  </TreeBody>
                </TreeRow>
              ))}
            </Tree>
          </BrowserPanel>

          <AxisLetter $x={2428} $y={34} $c="#8dff8d"><Fit w={11}>Y</Fit></AxisLetter>
          <AxisLetter $x={2415} $y={129} $c="#8484ff"><Fit w={13}>Z</Fit></AxisLetter>
          <ViewCube><CubeFace><Fit w={34}>TOP</Fit></CubeFace></ViewCube>
          <AxisLetter $x={2511} $y={118} $c="#ff8484"><Fit w={12}>X</Fit></AxisLetter>

          <CommentsPanel>
            <PanelHeader>
              <HeaderLead />
              <Fit w={86}>COMMENTS</Fit>
              <Spacer />
              <Badge plus />
            </PanelHeader>
          </CommentsPanel>

          <NavBar>
            <Slot $gap={0} $w={24}>
              <Svg w={24} h={24}>
                <path d="M10.500 24V5H8L12.500 0L17 5H14.500V24Z" fill="#fff" stroke="#444" strokeWidth="1.200" />
                <path d="M1 12Q4 9 12 9T23.500 13T12 17.500H5" stroke="#444" strokeWidth="1.800" />
                <path d="M3 17L9 13.500V20.500Z" fill="#111" />
              </Svg>
            </Slot>
            <Slot $gap={8} $w={9}><Caret w={9} /></Slot>
            <Slot $gap={8} $w={25}>
              <Svg w={25} h={24}>
                <path d="M3 6L8 2V5L14 1.500V4.500L19 1V6" fill="#eee" stroke="#444d58" strokeWidth="1.300" />
                <rect x="1" y="8" width="23" height="15.500" fill="#fff" stroke="#444d58" strokeWidth="1.600" />
                <rect x="6" y="13" width="13" height="6" fill="#b9c3cc" stroke="#444d58" strokeWidth="1.600" />
              </Svg>
            </Slot>
            <Slot $gap={15} $w={24}>
              <Svg w={24} h={24}>
                <path d="M8 23Q7 18 3 15Q0 13 1 12Q3 11 7 14L4 4Q5 1.500 6.500 4L9.500 11L9 2Q10-.500 12 2L12.500 11L15 2.500Q17 1 17.500 3L16.500 12L20.500 6Q23 5 22.500 8L18 18V23Z" fill="#fafafa" stroke="#444d58" strokeWidth="1.300" strokeLinejoin="round" />
              </Svg>
            </Slot>
            <Slot $gap={15} $w={24}>
              <Svg w={24} h={24}>
                <path d="M12 15L19 22" stroke="#444d58" strokeWidth="4.500" />
                <circle cx="7.500" cy="10" r="7" fill="#e2f1f0" stroke="#5b6670" strokeWidth="1.600" />
                <path d="M20 0V7M16.500 3.500H24M16.500 10H24" stroke="#444d58" strokeWidth="1.400" />
              </Svg>
            </Slot>
            <Slot $gap={15} $w={24}>
              <Svg w={24} h={24}>
                <rect x="1" y=".800" width="22.500" height="22.500" stroke="#666" strokeWidth="1.400" strokeDasharray="4 3" />
                <path d="M16 16L23 23" stroke="#3f454d" strokeWidth="5" />
                <circle cx="10" cy="9.500" r="9" fill="#e2f1f0" stroke="#5b6670" strokeWidth="1.600" />
              </Svg>
            </Slot>
            <Slot $gap={7} $w={9}><Caret w={9} /></Slot>
            <Slot $gap={9} $w={24}>
              <Svg w={24} h={24}>
                <rect x=".800" y="1" width="22.500" height="17" fill="#fff" stroke="#3f4650" strokeWidth="1.600" />
                <rect x="4" y="4" width="16" height="11" fill="#9dbbe3" stroke="#345a93" strokeWidth="1.500" />
                <path d="M8 18.500V22H6.500V23.300H17.500V22H16V18.500" fill="#fff" stroke="#3f4650" strokeWidth="1.300" />
              </Svg>
            </Slot>
            <Slot $gap={4} $w={9}><Caret w={8} /></Slot>
            <Slot $gap={10} $w={24}>
              <Svg w={24} h={24}>
                <rect x="1" y="1" width="22" height="22" fill="#fff" />
                <rect x="1" y="14" width="22" height="9" fill="#bcc4cd" />
                <path d="M5.400 1V23M9.800 1V23M14.200 1V23M18.600 1V23M1 5.400H23M1 9.800H23M1 14.200H23M1 18.600H23" stroke="#7d838a" strokeWidth="1" />
                <rect x="1" y="1" width="22" height="22" stroke="#42474e" strokeWidth="1.600" />
              </Svg>
            </Slot>
            <Slot $gap={3} $w={9}><Caret w={8} /></Slot>
            <Slot $gap={9.5} $w={24}>
              <Svg w={24} h={22}>
                {[[1, 1.5], [12.5, 1.5], [1, 11.5], [12.5, 11.5]].map(([x, y]) => (
                  <g key={`${x}-${y}`}>
                    <rect x={x} y={y} width="10.500" height="9" fill="#b9d0f0" stroke="#44618f" strokeWidth="1.500" />
                    <rect x={x + 2.8} y={y + 2.5} width="5" height="4" fill="#8fb0df" stroke="#5c80b8" strokeWidth=".800" />
                  </g>
                ))}
              </Svg>
            </Slot>
            <Slot $gap={4.5} $w={9}><Caret w={8} /></Slot>
          </NavBar>
        </Canvas>

        <Timeline>
          <Transport>
            <Svg w={20} h={22}><path d="M0 .500H3V21.500H0ZM19 1V21L4 11Z" fill="#4b4b4b" /></Svg>
            <Svg w={20} h={22}><path d="M14 1V21L-.500 11ZM15.500 6.500H19V15.500H15.500Z" fill="#4b4b4b" /></Svg>
            <Svg w={19} h={24}><path d="M0 0V23.500L18 12Z" fill="#4b4b4b" /></Svg>
            <Svg w={20} h={22}><path d="M4.500 1V21L19.500 11ZM0 6.500H3V15.500H0Z" fill="#4b4b4b" /></Svg>
            <Svg w={20} h={22}><path d="M15.500 .500H18.500V21.500H15.500ZM0 1V21L14.500 11Z" fill="#4b4b4b" /></Svg>
          </Transport>
          <Features>
            <FeatureRow>
              <FileSketch /><Extrude size={24} /><FileSketch /><Extrude size={24} />
              <Hole size={24} /><FileSketch /><Extrude size={24} />
            </FeatureRow>
            <Svg w={240} h={16}>
              <path d="M13.500 5V13.500H228.500V5M48 5V13M84 5V13M120 5V13M156 5V13M192 5V13" stroke="#c6c6c6" strokeWidth="3" />
            </Svg>
            <Marker>
              <Svg w={18} h={47}><path d="M0 0H18V6L10.500 13V47H7.500V13L0 6Z" fill="#666" /></Svg>
            </Marker>
          </Features>
          <GearSlot><Gear size={25} c="#7d7d7d" /></GearSlot>
        </Timeline>
      </Window>
    </>
  );
}
